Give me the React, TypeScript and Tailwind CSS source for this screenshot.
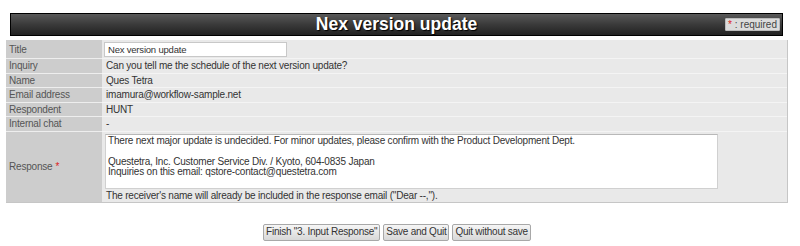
const rows: { label: string; value: string }[] = [
  { label: 'Inquiry', value: 'Can you tell me the schedule of the next version update?' },
  { label: 'Name', value: 'Ques Tetra' },
  { label: 'Email address', value: 'imamura@workflow-sample.net' },
  { label: 'Respondent', value: 'HUNT' },
  { label: 'Internal chat', value: '-' },
];

const responseText =
  'There next major update is undecided. For minor updates, please confirm with the Product Development Dept.\n\nQuestetra, Inc. Customer Service Div. / Kyoto, 604-0835 Japan\nInquiries on this email: qstore-contact@questetra.com';

export default function App() {
  return (
    <div className="w-[800px] h-[246px] bg-white pt-[13px] text-[10px] tracking-[-0.2px] text-[#333] font-['Liberation_Sans',Arial,sans-serif]">
      {/* Header bar */}
      <div className="relative mx-[10px] w-[773px] h-[23px] border border-black bg-gradient-to-b from-[#5a5a5a] via-[#3a3a3a] to-[#222] flex items-center justify-center">
        <span className="text-white font-bold text-[17.5px] tracking-normal leading-none [text-shadow:1px_1px_1px_#000]">
          Nex version update
        </span>
        <span className="absolute right-[2px] top-[4px] h-[13px] px-[2px] bg-[#dcdcdc] border border-[#bbb] rounded-[1px] text-[10px] tracking-normal leading-[11px] text-[#444]">
          <span className="text-[#d22]">*</span> : required
        </span>
      </div>

      {/* Form table */}
      <div className="mt-[4px] ml-[6px] w-[782px] border-r border-b border-[#c6c6c6] grid grid-cols-[96px_1fr]">
        <div className="bg-[#cdcdcd] border-b border-[#eee] pl-[3px] h-[19px] flex items-center text-[#555]">Title</div>
        <div className="bg-[#e9e9e9] border-b border-[#f4f4f4] pl-[2px] h-[19px] flex items-center">
          <input
            readOnly
            value="Nex version update"
            className="w-[183px] h-[15px] bg-white border border-[#c8c8c8] px-[3px] text-[9.5px] tracking-[-0.2px] text-[#333] outline-none"
          />
        </div>

        {rows.map((r) => (
          <div key={r.label} className="contents">
            <div className="bg-[#cdcdcd] border-b border-[#eee] pl-[3px] h-[14.5px] flex items-center text-[#555]">{r.label}</div>
            <div className="bg-[#e9e9e9] border-b border-[#f4f4f4] pl-[4px] h-[14.5px] flex items-center">{r.value}</div>
          </div>
        ))}

        <div className="bg-[#cdcdcd] pl-[3px] flex items-center text-[#555]">
          Response <span className="ml-[3px] text-[#d22]">*</span>
        </div>
        <div className="bg-[#e9e9e9] pl-[3px] pt-[2px] pb-[1px]">
          <div className="w-[613px] h-[55px] bg-white border border-[#d0d0d0] border-t-[#b8b8b8] px-[2px] pt-[1px] whitespace-pre-line leading-[10.5px]">
            {responseText}
          </div>
          <div className="pl-[1px] mt-[1px] leading-[11px]">The receiver&apos;s name will already be included in the response email (&quot;Dear --,&quot;).</div>
        </div>
      </div>

      {/* Buttons */}
      <div className="mt-[21px] flex justify-center gap-[3px] pr-[6px]">
        {['Finish "3. Input Response"', 'Save and Quit', 'Quit without save'].map((b) => (
          <button
            key={b}
            className="h-[17px] px-[2px] border border-[#a8a8a8] rounded-[2px] bg-gradient-to-b from-[#f6f6f6] to-[#d8d8d8] text-[10px] tracking-[-0.25px] leading-none text-[#333]"
          >
            {b}
          </button>
        ))}
      </div>
    </div>
  );
}
